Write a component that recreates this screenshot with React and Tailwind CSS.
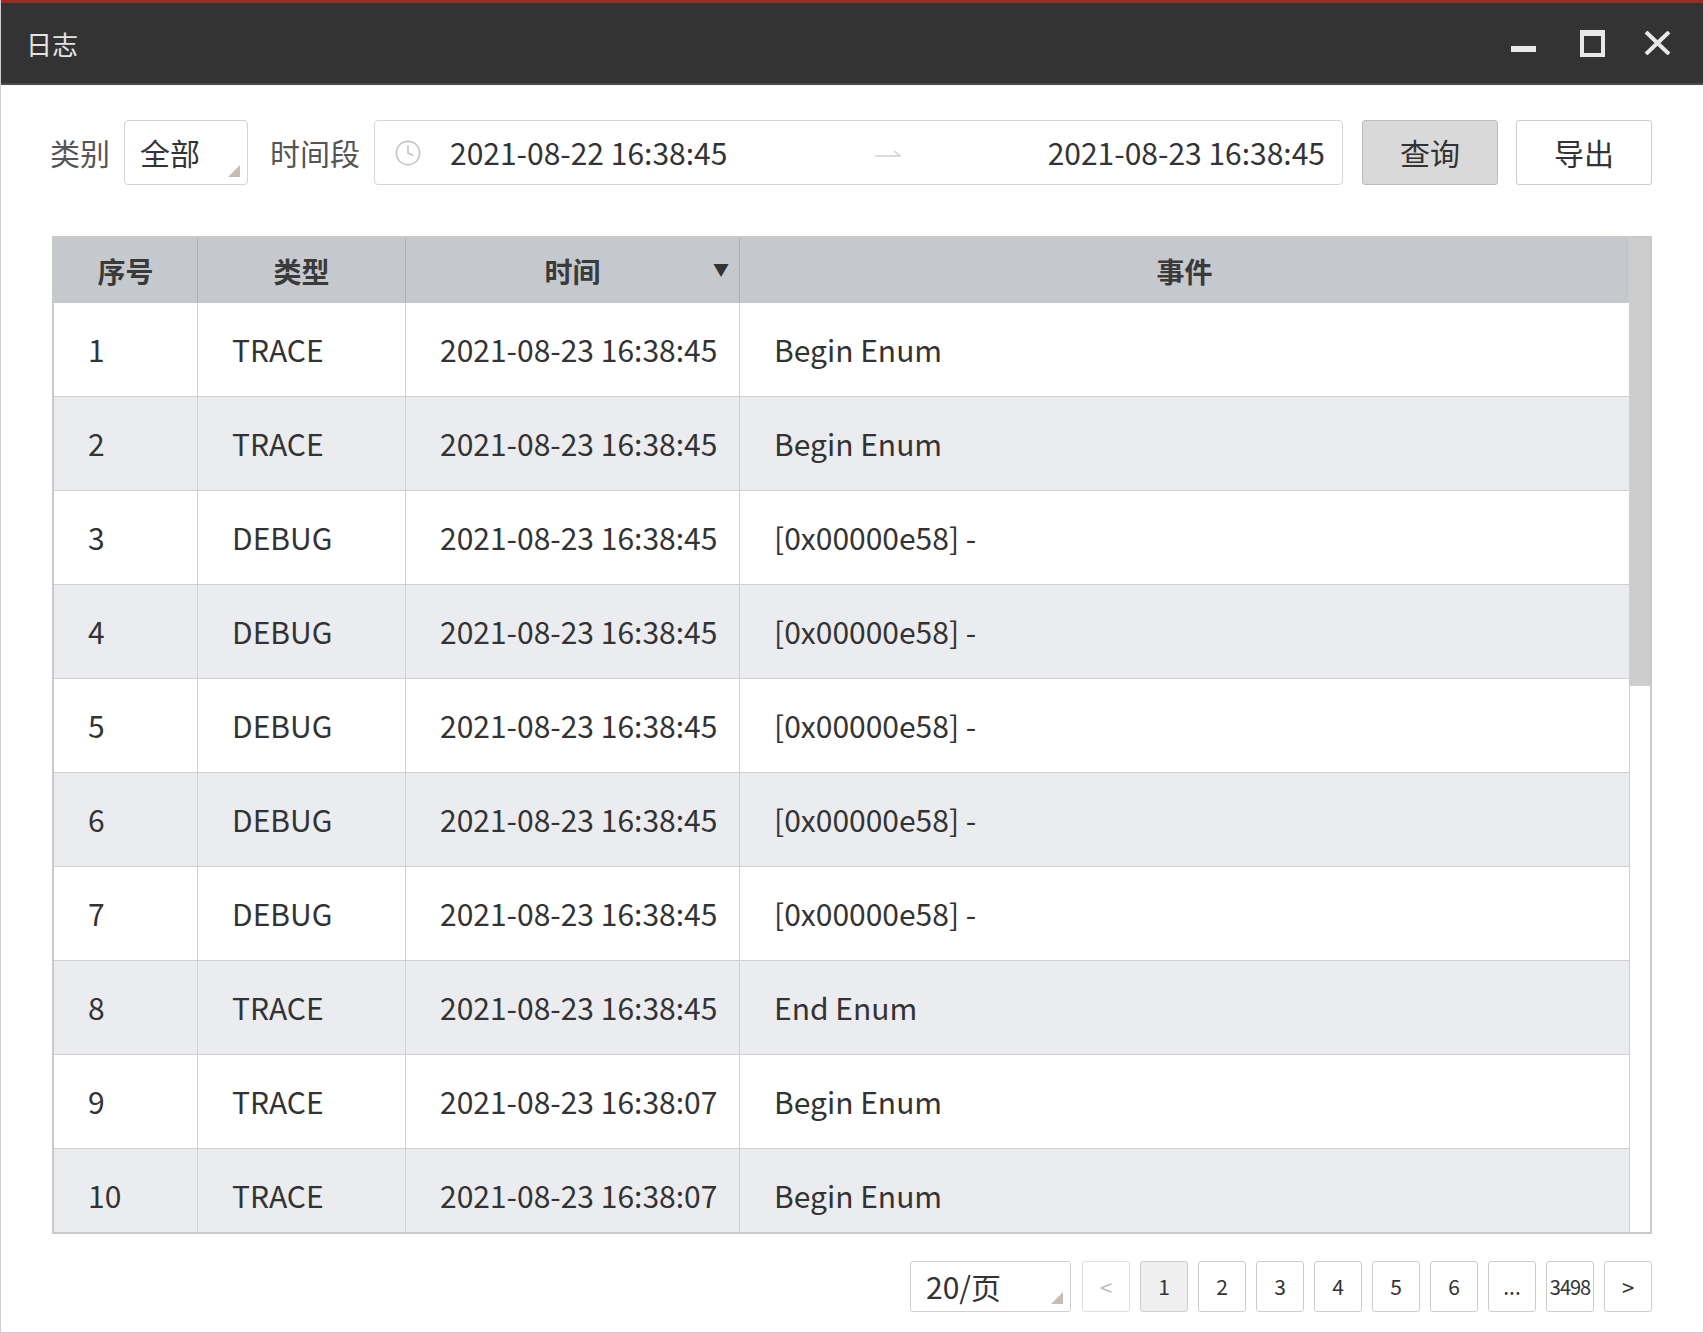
import { Clock } from 'lucide-react'

const rows = [
    [1, 'TRACE', '2021-08-23 16:38:45', 'Begin Enum'],
    [2, 'TRACE', '2021-08-23 16:38:45', 'Begin Enum'],
    [3, 'DEBUG', '2021-08-23 16:38:45', '[0x00000e58] -'],
    [4, 'DEBUG', '2021-08-23 16:38:45', '[0x00000e58] -'],
    [5, 'DEBUG', '2021-08-23 16:38:45', '[0x00000e58] -'],
    [6, 'DEBUG', '2021-08-23 16:38:45', '[0x00000e58] -'],
    [7, 'DEBUG', '2021-08-23 16:38:45', '[0x00000e58] -'],
    [8, 'TRACE', '2021-08-23 16:38:45', 'End Enum'],
    [9, 'TRACE', '2021-08-23 16:38:07', 'Begin Enum'],
    [10, 'TRACE', '2021-08-23 16:38:07', 'Begin Enum'],
]

const pages = ['1', '2', '3', '4', '5', '6', '...', '3498']

function classNames(...classes) {
    return classes.filter(Boolean).join(' ')
}

// little triangle in the corner of the dropdowns
function Corner() {
    return (
        <svg className="absolute right-[7px] bottom-[7px]" width="12" height="12" viewBox="0 0 12 12">
            <polygon points="12,0 12,12 0,12" fill="#c8bcb2" />
        </svg>
    )
}

export default function App() {
    return (
        <div className="flex h-[1333px] w-[1704px] flex-col border-x border-b border-[#cfcfcf] bg-white font-['Microsoft_YaHei','Noto_Sans_CJK_SC',sans-serif] text-[#333]">
            {/* title bar */}
            <div className="flex h-[85px] flex-none items-center border-t-[3px] border-b-2 border-t-[#a3291c] border-b-[#4a4a4a] bg-[#333333] pr-[32px] pl-[25px]">
                <span className="text-[26px] text-[#e4e4e4]">日志</span>
                <div className="ml-auto flex items-center">
                    <div className="mt-[12px] h-[6px] w-[25px] bg-[#e8e8e8]" />
                    <div className="ml-[44px] h-[27px] w-[25px] border-x-[4px] border-t-[6px] border-b-[4px] border-[#e8e8e8]" />
                    <svg className="ml-[39px]" width="27" height="24" viewBox="0 0 27 24">
                        <path d="M2 1 L25 23 M25 1 L2 23" stroke="#e8e8e8" strokeWidth="4" />
                    </svg>
                </div>
            </div>

            <div className="flex flex-1 flex-col px-[51px]">
                {/* toolbar */}
                <div className="mt-[35px] flex h-[65px] items-center text-[30px]">
                    <span className="-ml-[2px] text-[#555]">类别</span>
                    <div className="relative ml-[14px] flex h-full w-[124px] items-center rounded-[4px] border border-[#d2d2d2] pl-[15px]">
                        全部
                        <Corner />
                    </div>
                    <span className="ml-[22px] text-[#555]">时间段</span>
                    <div className="ml-[14px] flex h-full w-[969px] items-center rounded-[4px] border border-[#d6d6d6] pr-[17px] pl-[19px]">
                        <Clock size={28} strokeWidth={1.4} className="flex-none text-[#c4c4c4]" />
                        <span className="ml-[28px]">2021-08-22 16:38:45</span>
                        <div className="flex flex-1 justify-center">
                            <svg width="26" height="10" viewBox="0 0 26 10">
                                <path d="M0 8 H25 L19 3" fill="none" stroke="#cfcfcf" strokeWidth="1.5" />
                            </svg>
                        </div>
                        <span>2021-08-23 16:38:45</span>
                    </div>
                    <button className="ml-[19px] h-full w-[136px] rounded-[3px] border border-[#bcbcbc] bg-[#d9d9d9]">查询</button>
                    <button className="ml-[18px] h-full w-[136px] rounded-[3px] border border-[#cdcdcd] bg-white">导出</button>
                </div>

                {/* table */}
                <div className="mt-[51px] flex border-2 border-[#c9c9c9]">
                    <div className="flex-1">
                        <div className="grid h-[65px] grid-cols-[144px_208px_334px_1fr] bg-[#c5c8cc] text-[28px] font-bold text-[#3a3a3a]">
                            <div className="flex items-center justify-center border-r border-[#adb0b5]">序号</div>
                            <div className="flex items-center justify-center border-r border-[#adb0b5]">类型</div>
                            <div className="relative flex items-center justify-center border-r border-[#adb0b5]">
                                时间
                                <span className="absolute top-[19px] right-[10px] text-[16px] text-[#333]">▼</span>
                            </div>
                            <div className="flex items-center justify-center">事件</div>
                        </div>
                        <div className="h-[929px] overflow-hidden">
                            {rows.map((row, idx) => (
                                <div
                                    key={row[0]}
                                    className={classNames(
                                        idx % 2 ? 'bg-[#ebecf0]' : 'bg-white',
                                        'grid h-[94px] grid-cols-[144px_208px_334px_1fr] border-b border-[#d0d0d0] text-[30px]',
                                    )}
                                >
                                    {row.map((cell, i) => (
                                        <div
                                            key={i}
                                            className={classNames(i < 3 && 'border-r border-[#d0d0d0]', 'flex items-center pl-[34px]')}
                                        >
                                            {cell}
                                        </div>
                                    ))}
                                </div>
                            ))}
                        </div>
                    </div>
                    {/* scrollbar */}
                    <div className="w-[21px] flex-none border-l border-[#d0d0d0]">
                        <div className="h-[448px] bg-[#cdcdcd]" />
                    </div>
                </div>

                {/* pagination */}
                <div className="mt-[27px] flex h-[51px] justify-end gap-[10px]">
                    <div className="relative mr-[1px] flex w-[161px] items-center rounded-[3px] border border-[#d0d0d0] pl-[15px] text-[30px]">
                        20/页
                        <Corner />
                    </div>
                    <div className="flex w-[48px] items-center justify-center rounded-[3px] border border-[#e0e0e0] text-[22px] text-[#bbb]">&lt;</div>
                    {pages.map((p) => (
                        <div
                            key={p}
                            className={classNames(
                                p === '1' ? 'bg-[#efefef]' : 'bg-white',
                                p === '3498' ? 'text-[20px] tracking-[-1px]' : 'text-[21px]',
                                'flex w-[48px] items-center justify-center overflow-hidden rounded-[3px] border border-[#cdcdcd]',
                            )}
                        >
                            {p}
                        </div>
                    ))}
                    <div className="flex w-[48px] items-center justify-center rounded-[3px] border border-[#cdcdcd] text-[22px]">&gt;</div>
                </div>
            </div>
        </div>
    )
}
